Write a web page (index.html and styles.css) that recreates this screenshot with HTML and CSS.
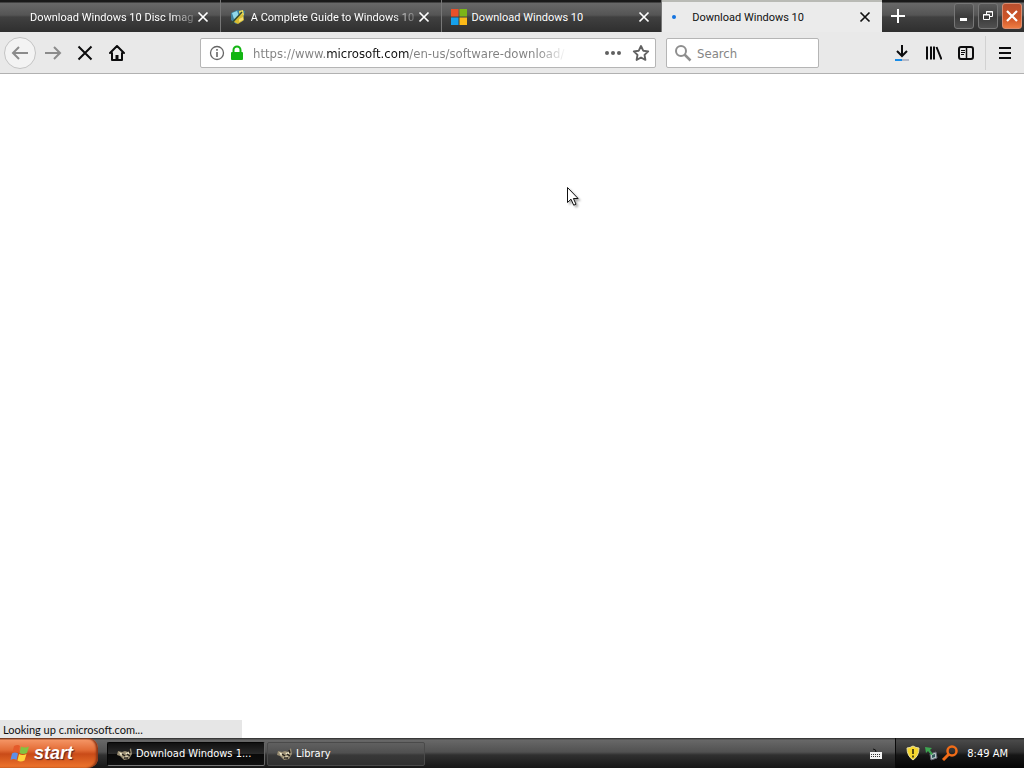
FILE: index.html
```html
<!DOCTYPE html>
<html lang="en">
<head>
<meta charset="utf-8">
<title>Download Windows 10</title>
<link rel="stylesheet" href="styles.css">
</head>
<body>
<header class="browser">
  <div class="titlebar">
    <div class="tabs" role="tablist">
      <div class="tab">
        <button class="tab-label no-icon" role="tab"><span class="tab-text fade">Download Windows 10 Disc Imag</span></button>
        <button class="tab-close" aria-label="Close tab"><svg width="12" height="12" viewBox="0 0 12 12"><path d="M1.500 1.500l9 9M10.500 1.500l-9 9"/></svg></button>
      </div>
      <div class="tab">
        <button class="tab-label" role="tab">
          <svg class="favicon" width="16" height="16" viewBox="0 0 16 16"><path d="M1 4l6-3 8 1-2 10-7 3-5-4z" fill="#3f7f9b"/><path d="M2 4l5-2 2 5-5 3z" fill="#8fd7ea"/><path d="M9 2l4-1 1 5-4 2z" fill="#f2e05c"/><path d="M6 8l7-3 1 6-6 4-4-2z" fill="#d9bd32"/><path d="M1 15L12 3" stroke="#304a35" stroke-width="1.500"/><path d="M9 10l4-2v3l-4 2z" fill="#f5df72"/></svg>
          <span class="tab-text fade">A Complete Guide to Windows 10</span></button>
        <button class="tab-close" aria-label="Close tab"><svg width="12" height="12" viewBox="0 0 12 12"><path d="M1.500 1.500l9 9M10.500 1.500l-9 9"/></svg></button>
      </div>
      <div class="tab">
        <button class="tab-label" role="tab">
          <svg class="favicon" width="16" height="16" viewBox="0 0 16 16"><path fill="#e8502a" d="M0 0h7.500v7.500H0z"/><path fill="#7cb518" d="M8.500 0H16v7.500H8.500z"/><path fill="#16a0ea" d="M0 8.500h7.500V16H0z"/><path fill="#fbb918" d="M8.500 8.500H16V16H8.500z"/></svg>
          <span class="tab-text">Download Windows 10</span></button>
        <button class="tab-close" aria-label="Close tab"><svg width="12" height="12" viewBox="0 0 12 12"><path d="M1.500 1.500l9 9M10.500 1.500l-9 9"/></svg></button>
      </div>
      <div class="tab active">
        <button class="tab-label" role="tab" aria-selected="true">
          <svg class="favicon" width="16" height="16" viewBox="0 0 16 16"><circle cx="3" cy="8" r="2" fill="#1473e0"/></svg>
          <span class="tab-text">Download Windows 10</span></button>
        <button class="tab-close" aria-label="Close tab"><svg width="12" height="12" viewBox="0 0 12 12"><path d="M1.500 1.500l9 9M10.500 1.500l-9 9"/></svg></button>
      </div>
    </div>
    <button class="new-tab" aria-label="New tab"><svg width="16" height="16" viewBox="0 0 16 16"><path d="M8 1v14M1 8h14" stroke="#fff" stroke-width="2"/></svg></button>
    <div class="window-buttons">
      <button class="win" aria-label="Minimize"><svg width="16" height="16" viewBox="0 0 16 16"><path d="M4 11.500h7" stroke="#fff" stroke-width="3"/></svg></button>
      <button class="win" aria-label="Restore"><svg width="16" height="16" viewBox="0 0 16 16" fill="none" stroke="#fff"><path d="M3.500 6.500h6v5h-6zM3 7h7M6.500 6V3.500h6v5H10M6 4h7"/></svg></button>
      <button class="win close" aria-label="Close"><svg width="16" height="16" viewBox="0 0 16 16"><path d="M3 3l10 10M13 3L3 13" stroke="#fff" stroke-width="2.200"/></svg></button>
    </div>
  </div>
  <nav class="toolbar">
    <button class="tool back" aria-label="Back"><svg width="18" height="16" viewBox="0 0 18 16"><path d="M17 8H2M8 2L2 8l6 6" fill="none" stroke="#8b8b8b" stroke-width="2"/></svg></button>
    <button class="tool" aria-label="Forward"><svg width="18" height="16" viewBox="0 0 18 16"><path d="M1 8h15M10 2l6 6-6 6" fill="none" stroke="#8b8b8b" stroke-width="2"/></svg></button>
    <button class="tool" aria-label="Stop"><svg width="16" height="16" viewBox="0 0 16 16"><path d="M1.500 1.500l13 13M14.500 1.500l-13 13" stroke="#0c0c0d" stroke-width="2"/></svg></button>
    <button class="tool" aria-label="Home"><svg width="16" height="16" viewBox="0 0 16 16" fill="none" stroke="#0c0c0d" stroke-width="2" stroke-linejoin="round" stroke-linecap="round"><path d="M1 8l7-7 7 7M3 8v7h10V8"/><path d="M8 14v-4" stroke-width="3" stroke-linecap="butt"/></svg></button>
    <span class="spacer"></span>
    <div class="field address">
      <svg width="16" height="16" viewBox="0 0 16 16" fill="none" stroke="#666"><circle cx="8" cy="8" r="6.500" stroke-width="1.300"/><path d="M8 7v5M8 4v1.700" stroke-width="1.600"/></svg>
      <svg width="14" height="16" viewBox="0 0 14 16"><path d="M3.500 8V5a3.500 3.500 0 0 1 7 0v3" fill="none" stroke="#12b512" stroke-width="2"/><rect x="1" y="7" width="12" height="8" rx="1" fill="#12b512"/></svg>
      <input class="url" type="text" aria-label="Address" value="https://www.microsoft.com/en-us/software-download/">
      <button class="mini" aria-label="Page actions"><svg width="18" height="16" viewBox="0 0 18 16" fill="#606060"><circle cx="3" cy="8" r="2"/><circle cx="9" cy="8" r="2"/><circle cx="15" cy="8" r="2"/></svg></button>
      <button class="mini" aria-label="Bookmark this page"><svg width="18" height="18" viewBox="0 0 18 18"><path d="M9 2l2.200 4.700 5 .7-3.700 3.500.9 5L9 13.500 4.600 15.900l.9-5L1.800 7.400l5-.7z" fill="none" stroke="#606060" stroke-width="1.900" stroke-linejoin="round"/></svg></button>
    </div>
    <div class="field search">
      <svg width="18" height="18" viewBox="0 0 18 18" fill="none" stroke="#8e8e8e" stroke-width="2"><circle cx="7" cy="7" r="5"/><path d="M10.500 10.500L16.500 16.500" stroke-width="2.500"/></svg>
      <input class="query" type="text" aria-label="Search" placeholder="Search">
    </div>
    <span class="spacer"></span>
    <button class="tool" aria-label="Downloads"><svg width="16" height="18" viewBox="0 0 16 18"><path d="M8 1v11M3 7l5 5 5-5" fill="none" stroke="#0c0c0d" stroke-width="2"/><path d="M1 16h7" stroke="#168ce8" stroke-width="2"/><path d="M8 16h7" stroke="#b4b9c8" stroke-width="2"/></svg></button>
    <button class="tool" aria-label="Library"><svg width="16" height="16" viewBox="0 0 16 16" stroke="#0c0c0d" stroke-width="2"><path d="M1 1.500v13M5 1.500v13M8 1.500v13M10.500 2L15.500 14.500"/></svg></button>
    <button class="tool" aria-label="Sidebars"><svg width="16" height="16" viewBox="0 0 16 16" fill="none" stroke="#0c0c0d"><rect x="1" y="2" width="14" height="12" rx="2" stroke-width="2"/><path d="M8.500 2v12" stroke-width="1.500"/><path d="M3 5.500h4M3 7.500h4M3 9.500h3"/></svg></button>
    <span class="divider"></span>
    <button class="tool" aria-label="Open menu"><svg width="16" height="16" viewBox="0 0 16 16"><path d="M2 3h12M2 8h12M2 13h12" stroke="#0c0c0d" stroke-width="2"/></svg></button>
  </nav>
</header>
<main class="page">
  <div class="status" role="status">Looking up c.microsoft.com...</div>
</main>
<footer class="taskbar">
  <button class="start">
    <svg width="20" height="18" viewBox="0 0 20 18"><path d="M4 2q4-2 6 0L8.500 8.500q-3-2-6 0z" fill="#e45a2a"/><path d="M11 2.500q4 2 8 0L17 9q-4 2-7.500 0z" fill="#82c341"/><path d="M2 9.500q3-2 6 0L6.500 16q-3-2-6 0z" fill="#5d8fe8"/><path d="M9 10q4 2 7.500 0l-2 6.500q-4 2-7 0z" fill="#ffd33c"/></svg>
    <span>start</span>
  </button>
  <div class="tasks">
    <button class="task pressed"><svg width="16" height="16" viewBox="0 0 16 16"><path d="M1 5l4 1 3-1 3 1 3-4 1 6-3 5-5 1-4-4-3-1z" fill="#9a8e73"/><path d="M2 6l4 2-2 2zM8 7l5-1-2 3zM6 11l5-1-2 3z" fill="#f5edcf"/><path d="M5 8l3 2M10 8l3 2M7 12h4M12 4l1 3" stroke="#24201b" stroke-width="1.500"/></svg><span>Download Windows 1...</span></button>
    <button class="task"><svg width="16" height="16" viewBox="0 0 16 16"><path d="M1 5l4 1 3-1 3 1 3-4 1 6-3 5-5 1-4-4-3-1z" fill="#9a8e73"/><path d="M2 6l4 2-2 2zM8 7l5-1-2 3zM6 11l5-1-2 3z" fill="#f5edcf"/><path d="M5 8l3 2M10 8l3 2M7 12h4M12 4l1 3" stroke="#24201b" stroke-width="1.500"/></svg><span>Library</span></button>
  </div>
  <button class="keyboard" aria-label="Keyboard"><svg width="14" height="14" viewBox="0 0 14 14"><path d="M4 2q3 0 3 3" fill="none" stroke="#111"/><path d="M1 5h12v7H1z" fill="#f4f4f4"/><path d="M2 7.500h10M2 9.500h10" stroke="#333" stroke-dasharray="1 1"/></svg></button>
  <div class="tray">
    <svg width="16" height="16" viewBox="0 0 16 16"><path d="M8 1q3 2 6 2 0 8-6 12Q2 11 2 3q3 0 6-2z" fill="#f7d72d" stroke="#e8dfa0"/><path d="M8 4v5M8 10.500v2" stroke="#574b12" stroke-width="2"/></svg>
    <svg width="16" height="16" viewBox="0 0 16 16"><path d="M7 9l6-2 1 6-6 2z" fill="#b9c9c7" stroke="#667"/><path d="M9 10l3-1v3l-3 1z" fill="#33595c"/><path d="M2 2l7 1-2 2 3 4-2 1-3-4-2 2z" fill="#3da551"/></svg>
    <svg width="18" height="16" viewBox="0 0 18 16" fill="none" stroke="#f06c18"><circle cx="11" cy="6" r="4.500" stroke-width="2.500"/><path d="M8 9l-6 6" stroke-width="3"/></svg>
    <time class="clock">8:49 AM</time>
  </div>
</footer>
<svg class="cursor" width="13" height="21" viewBox="0 0 13 21"><path d="M.5.5v15l3.500-3.300 2.700 6 2.300-1-2.600-5.700h4.700z" fill="#fff" stroke="#111"/></svg>
</body>
</html>
```
FILE: styles.css
```css
* { box-sizing: border-box; }
body {
  margin: 0;
  height: 100vh;
  display: flex;
  flex-direction: column;
  overflow: hidden;
  background: #fff;
  color: #111;
  font: 11px/16px "DejaVu Sans Condensed", "DejaVu Sans", sans-serif;
}
button { margin: 0; padding: 0; border: 0; background: none; color: inherit; font: inherit; }
svg { display: block; flex: none; }
input { font: inherit; }

.titlebar {
  display: flex;
  height: 32px;
  background: linear-gradient(#191919 0 2px, #686868 3px, #555 15px, #404040 17px, #2f2f2f);
}
.tabs { display: flex; flex: 1; min-width: 0; font-family: Roboto, sans-serif; }
.tab {
  display: flex;
  flex: 1;
  min-width: 0;
  align-items: center;
  padding: 2px 11px 0 9px;
  border-right: 1px solid #777;
  color: #fff;
}
.tab-label { display: flex; flex: 1; min-width: 0; align-items: center; gap: 5px; text-align: left; }
.no-icon { padding-left: 21px; }
.tab-text { flex: 1; overflow: hidden; padding-top: 1px; white-space: nowrap; }
.fade { mask-image: linear-gradient(to right, #000 calc(100% - 24px), rgba(0, 0, 0, 0.2)); }
.tab-close { display: flex; padding-left: 2px; }
.tab-close svg { fill: none; stroke: currentColor; stroke-width: 1.7; }
.tab.active { background: linear-gradient(#b9bab5 2px, #ebebeb 2px); border-right: 0; color: #111; }
.new-tab { display: flex; align-items: center; justify-content: center; width: 32px; }
.window-buttons { display: flex; align-items: center; gap: 4px; padding: 0 2px 0 40px; }
.win {
  display: flex;
  align-items: center;
  justify-content: center;
  width: 20px;
  height: 26px;
  border: 1px solid #777;
  border-radius: 3px;
  background: linear-gradient(#5b5b5b, #3b3b3b 55%, #505050);
}
.win.close { border-color: #d98d70; background: linear-gradient(#b94f2f, #cf5527 60%, #ee7c43); }

.toolbar {
  display: flex;
  align-items: center;
  height: 42px;
  padding: 0 3px 0 4px;
  border-bottom: 1px solid #b1b1b1;
  background: #e9e9e9;
}
.tool { display: flex; flex: none; align-items: center; justify-content: center; width: 32px; height: 32px; }
.back { border: 1px solid #c4c4c4; border-radius: 50%; background: #f3f3f3; margin-right: 1px; }
.spacer { flex: 67 1 67px; }
.divider { width: 1px; height: 34px; margin: 0 3px; background: #d2d2d2; }
.field {
  display: flex;
  align-items: center;
  min-width: 0;
  height: 30px;
  border: 1px solid #b5b5b5;
  border-radius: 2px;
  background: #fff;
  font-size: 13px;
}
.address { flex: 456 1 456px; padding: 0 2px 0 8px; gap: 5px; }
.search { flex: 153 1 153px; margin-left: 10px; padding: 0 6px 0 7px; gap: 5px; }
.field input { flex: 1; min-width: 0; height: 24px; padding: 2px 0 0; border: 0; outline: 0; color: #777; }
.url {
  margin-left: 4px;
  background: linear-gradient(to right, #808080 74px, #111 74px 156px, #808080 156px);
  background-clip: text;
  -webkit-text-fill-color: transparent;
  mask-image: linear-gradient(to right, #000 calc(100% - 60px), transparent calc(100% - 30px));
}
.query { background: none; }
.query::placeholder { color: #858585; opacity: 1; }
.mini { display: flex; padding: 0 3px 0 2px; }

.page { flex: 1; display: flex; align-items: flex-end; }
.status { width: 242px; height: 18px; padding: 2px 3px 0; background: #e6e6e6; font-family: Lato, sans-serif; }

.taskbar {
  display: flex;
  height: 30px;
  background: linear-gradient(#292929, #686868 2px, #515151 14px, #303030 17px, #171717);
  color: #fff;
}
.start {
  display: flex;
  flex: none;
  align-items: center;
  gap: 4px;
  width: 98px;
  padding-left: 10px;
  border-radius: 0 10px 10px 0;
  background: linear-gradient(#4d2415, #f49464 2px, #e36c36 12px, #c94b18 16px, #ef762d);
  box-shadow: inset -2px 0 2px #8b3516;
  font: italic bold 18px/24px "Liberation Sans", sans-serif;
  text-shadow: 1px 1px 1px #522;
}
.tasks { display: flex; flex: 1; gap: 2px; padding: 4px 0 2px 9px; }
.task {
  display: flex;
  align-items: center;
  gap: 3px;
  width: 158px;
  padding-left: 9px;
  border: 1px solid #4a4a4a;
  border-radius: 2px;
  background: linear-gradient(#606060, #505050 45%, #383838 55%, #303030);
}
.pressed { border-color: #050505 #666 #777 #050505; background: linear-gradient(#111, #292929 48%, #090909 52%, #101010); }
.keyboard { display: flex; align-items: center; justify-content: center; width: 38px; padding-top: 2px; }
.tray {
  display: flex;
  align-items: center;
  gap: 2px;
  padding: 0 16px 0 9px;
  border-left: 1px solid #0a0a0a;
  background: linear-gradient(#222, #4a4a4a 2px, #303030 14px, #161616 17px, #050505);
}
.clock { padding: 1px 0 0 6px; }
.cursor { position: absolute; left: 567px; top: 187px; filter: drop-shadow(2px 2px 1px #aaa); }
```
